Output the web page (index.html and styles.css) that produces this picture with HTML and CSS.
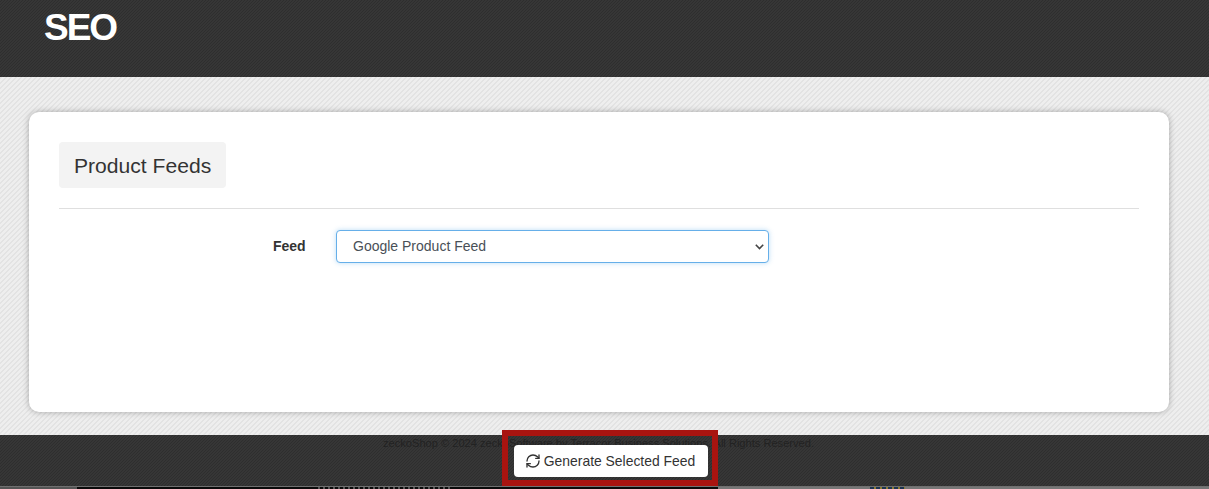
FILE: index.html
```html
<!DOCTYPE html>
<html lang="en">
<head>
<meta charset="utf-8">
<title>SEO</title>
<link rel="stylesheet" href="styles.css">
</head>
<body>
<header class="top">
  <h1 class="title">SEO</h1>
</header>
<main class="main">
  <section class="card">
    <h2 class="tab">Product Feeds</h2>
    <hr class="rule">
    <form class="row">
      <label class="label" for="feed">Feed</label>
      <select class="select" id="feed">
        <option>Google Product Feed</option>
      </select>
    </form>
  </section>
</main>
<footer class="foot">
  <p class="copy">zeckoShop © 2024 zeckoSoftware by Terracor Business Solutions. All Rights Reserved.</p>
  <div class="action">
    <button class="btn" type="button">
      <svg class="icon" viewBox="0 0 24 24" aria-hidden="true"><path d="M3 12a9 9 0 0 1 9-9 9.750 9.750 0 0 1 6.740 2.740L21 8"/><path d="M21 3v5h-5"/><path d="M21 12a9 9 0 0 1-9 9 9.750 9.750 0 0 1-6.740-2.740L3 16"/><path d="M8 16H3v5"/></svg>
      Generate Selected Feed
    </button>
  </div>
</footer>
<div class="under">
  <span class="seg seg-grey-a"></span>
  <span class="seg seg-black-a"></span>
  <span class="seg seg-text"></span>
  <span class="seg seg-black-b"></span>
  <span class="seg seg-grey-b"></span>
  <span class="seg seg-navy"></span>
  <span class="seg seg-grey-c"></span>
</div>
</body>
</html>
```
FILE: styles.css
```css
* { box-sizing: border-box; }
html, body { margin: 0; height: 489px; overflow: hidden; }
body {
  font-family: "Liberation Sans", Arial, sans-serif;
  color: #212529;
  background-color: #e8e8e8;
  background-image: linear-gradient(135deg, #eeeeee 25%, #e3e3e3 25% 50%, #eeeeee 50% 75%, #e3e3e3 75%);
  background-size: 5px 5px;
  display: flex;
  flex-direction: column;
}
.top {
  height: 77px;
  flex: none;
  background-color: #333;
  background-image: linear-gradient(135deg, #363636 25%, #2e2e2e 25% 50%, #363636 50% 75%, #2e2e2e 75%);
  background-size: 3px 3px;
  padding-left: 44px;
}
.title {
  margin: 0;
  padding-top: 9px;
  font-size: 37px;
  line-height: 38px;
  font-weight: 700;
  letter-spacing: -2px;
  color: #fff;
}
.main {
  flex: none;
  height: 358px;
  padding: 35px 40px 23px 29px;
}
.card {
  height: 300px;
  background: #fff;
  border-radius: 10px;
  box-shadow: 0 0 6px rgba(0, 0, 0, .3);
  padding: 30px;
}
.tab {
  display: inline-block;
  margin: 0;
  height: 46px;
  padding: 0 14.5px 0 15px;
  background: #f3f3f3;
  border-radius: 4px;
  font-size: 21.1px;
  line-height: 48px;
  font-weight: 400;
  color: #333;
}
.rule {
  margin: 20px 0 21px;
  border: 0;
  border-top: 1px solid #dfdfdf;
}
.row {
  display: flex;
  align-items: center;
  margin-left: 214px;
}
.label {
  width: 63px;
  padding-bottom: 2px;
  font-size: 14px;
  font-weight: 700;
  color: #333;
}
.select {
  appearance: none;
  width: 433px;
  height: 33px;
  padding: 0 16px 2px;
  background-color: #fff;
  background-image: url("data:image/svg+xml,%3Csvg xmlns='http://www.w3.org/2000/svg' width='9' height='6' viewBox='0 0 9 6'%3E%3Cpath d='M.8 .8l3.700 3.700 3.700-3.700' fill='none' stroke='%23444' stroke-width='1.600'/%3E%3C/svg%3E");
  background-repeat: no-repeat;
  background-position: right 4px center;
  border: 1px solid #66afe9;
  border-radius: 4px;
  box-shadow: 0 0 5px rgba(102, 175, 233, .45);
  font-family: "Liberation Sans", Arial, sans-serif;
  font-size: 14px;
  color: #495057;
}
.foot {
  position: relative;
  flex: none;
  height: 51px;
  background-color: #333;
  background-image: linear-gradient(135deg, #363636 25%, #2e2e2e 25% 50%, #363636 50% 75%, #2e2e2e 75%);
  background-size: 3px 3px;
  text-align: center;
}
.copy {
  margin: 0;
  padding-top: 2px;
  padding-right: 12px;
  font-size: 11.1px;
  line-height: 13px;
  color: #222;
}
.action {
  position: absolute;
  left: 502px;
  top: -5px;
  width: 216px;
  height: 56px;
  display: flex;
  align-items: flex-end;
  justify-content: center;
  padding: 0 0 3px 2px;
  border: 6px solid #a81410;
}
.btn {
  display: flex;
  align-items: center;
  justify-content: center;
  gap: 3px;
  width: 194px;
  height: 32px;
  padding: 0 2px 0 0;
  background: #fff;
  border: 0;
  border-radius: 4px;
  font-family: "Liberation Sans", Arial, sans-serif;
  font-size: 13.9px;
  color: #333;
}
.icon {
  width: 16px;
  height: 16px;
  fill: none;
  stroke: #333;
  stroke-width: 2;
  stroke-linecap: round;
  stroke-linejoin: round;
}
.under {
  flex: none;
  height: 3px;
  display: flex;
  border-top: 1px solid #707070;
}
.seg { display: block; height: 100%; }
.seg-grey-a { width: 77px; background: #555; }
.seg-black-a { width: 241px; background: #0a0a0a; }
.seg-text {
  width: 132px;
  background-color: #0a0a0a;
  background-image: repeating-linear-gradient(90deg, #555 0 2px, #0a0a0a 2px 5px);
}
.seg-black-b { width: 268px; background: #0a0a0a; }
.seg-grey-b { width: 152px; background: #777; }
.seg-navy {
  width: 35px;
  background-color: #1b3350;
  background-image: repeating-linear-gradient(90deg, #1b3350 0 4px, #8a7a30 4px 6px);
}
.seg-grey-c { flex: 1; background: #777; }
```
